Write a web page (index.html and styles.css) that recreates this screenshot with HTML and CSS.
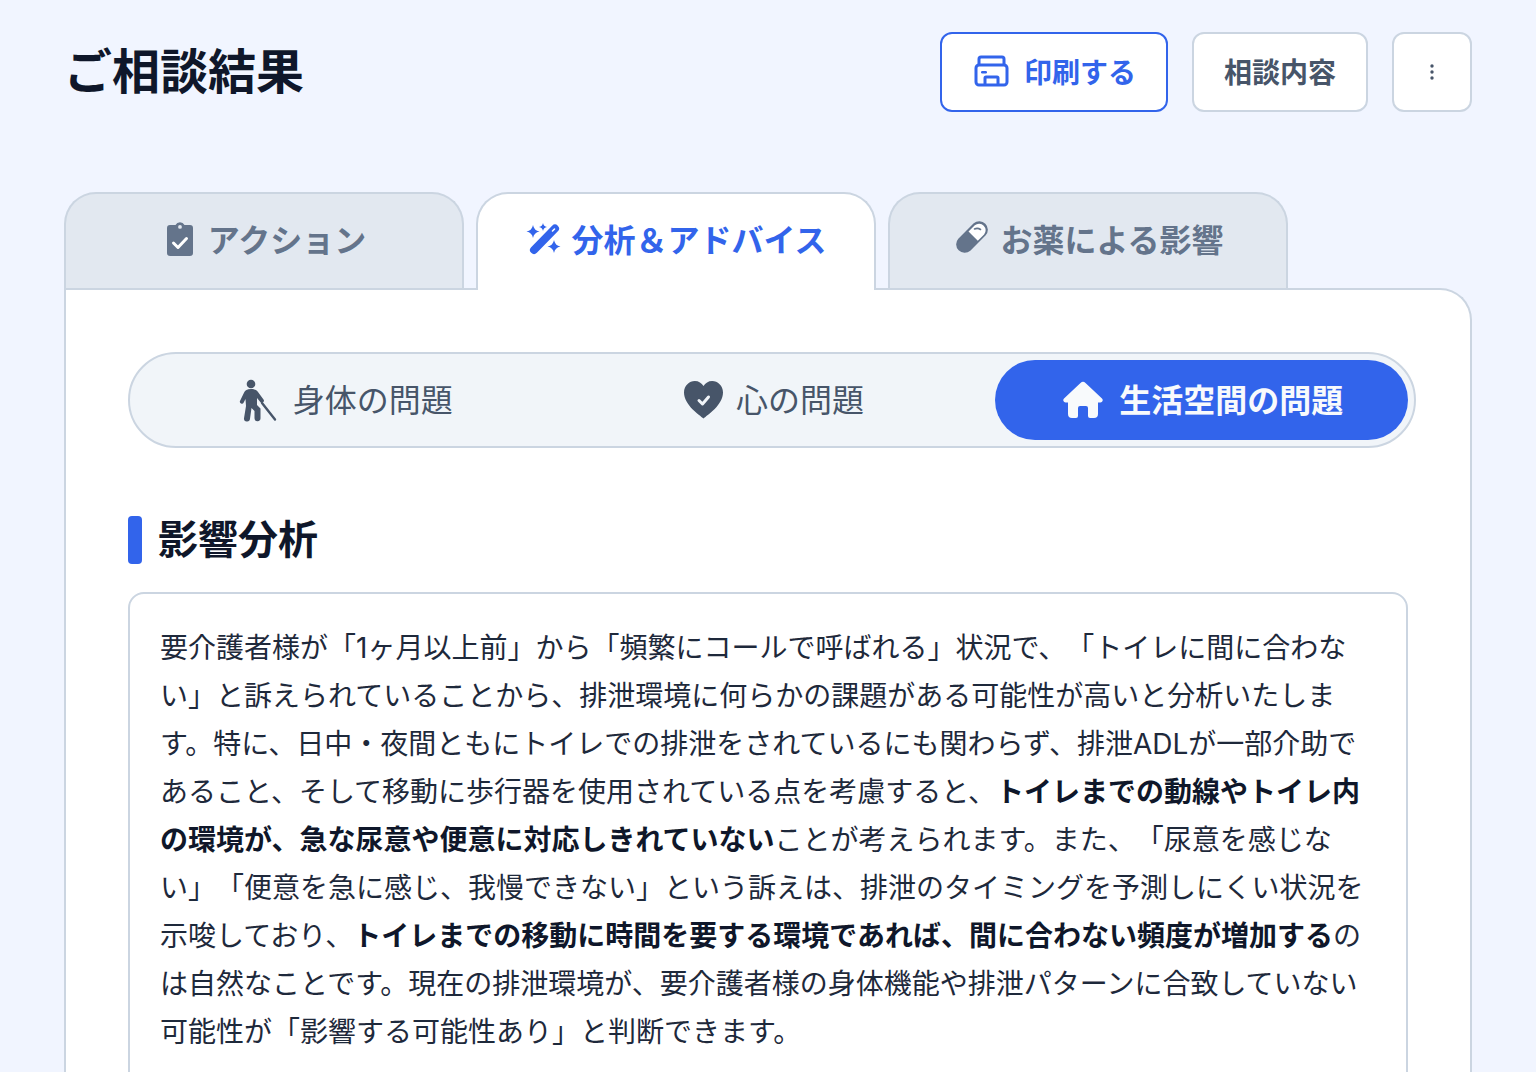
FILE: index.html
```html
<!DOCTYPE html>
<html lang="ja">
<head>
    <meta charset="UTF-8">
    <meta name="viewport" content="width=device-width, initial-scale=1.0">
    <title>ご相談結果</title>
    <link rel="stylesheet" href="styles.css">
</head>
<body>
    <header class="page-header">
        <h1>ご相談結果</h1>
        <div class="header-actions">
            <button class="btn btn-primary">
                <svg class="btn-icon" viewBox="0 0 36 36">
                    <g fill="none" stroke="currentColor" stroke-width="3" stroke-linejoin="round">
                        <path d="M5 12V6a2 2 0 0 1 2-2h21a2 2 0 0 1 2 2v6"/>
                        <rect x="2" y="12" width="31" height="20" rx="3"/>
                        <path d="M11 32v-7a1 1 0 0 1 1-1h11a1 1 0 0 1 1 1v7"/>
                    </g>
                    <rect x="7" y="18" width="6" height="2.500" rx="1.200" fill="currentColor"/>
                </svg>
                印刷する
            </button>
            <button class="btn btn-plain">相談内容</button>
            <button class="btn btn-more" aria-label="その他">
                <svg viewBox="0 0 4 16" width="4" height="16" fill="currentColor">
                    <circle cx="2" cy="2" r="1.700"/><circle cx="2" cy="8" r="1.700"/><circle cx="2" cy="14" r="1.700"/>
                </svg>
            </button>
        </div>
    </header>

    <nav class="tabs">
        <div class="tab">
            <svg class="tab-icon" viewBox="-5 0 32 35">
                <path fill="currentColor" fill-rule="evenodd" d="M3 4h5.500a5 5 0 0 1 9 0H23a3 3 0 0 1 3 3v25a3 3 0 0 1-3 3H3a3 3 0 0 1-3-3V7a3 3 0 0 1 3-3zm10 3.800a1.900 1.900 0 1 0 0-3.800 1.900 1.900 0 0 0 0 3.800z"/>
                <path fill="none" stroke="#fff" stroke-width="3" stroke-linecap="round" stroke-linejoin="round" d="M6.500 22l4.500 4.500 8.500-9"/>
            </svg>
            アクション
        </div>
        <div class="tab tab-active">
            <svg class="tab-icon" viewBox="-2 0 32 34">
                <path fill="none" stroke="currentColor" stroke-width="8" stroke-linecap="round" d="M7 28.500L28 7"/>
                <path fill="none" stroke="#fff" stroke-width="1.600" stroke-linecap="round" d="M25.500 9.500l2-2"/>
                <path fill="currentColor" d="M6 3.500Q7 9 12.500 10Q7 11 6 16.500Q5 11 -.5 10Q5 9 6 3.500zM16 1.500Q16.600 4.900 20 5.500Q16.600 6.100 16 9.500Q15.400 6.100 12 5.500Q15.400 4.900 16 1.500zM27 18.500Q28 24 33.500 25Q28 26 27 31.500Q26 26 20.500 25Q26 24 27 18.500z"/>
            </svg>
            分析＆アドバイス
        </div>
        <div class="tab">
            <svg class="tab-icon tab-icon-pill" viewBox="-5 0 34 32">
                <path fill="currentColor" d="M2.800 18.200L18.200 2.800a8.500 8.500 0 0 1 12 12L14.800 30.200a8.500 8.500 0 0 1-12-12z" transform="translate(-1.500 -1.500)"/>
                <path fill="#fff" d="M11.500 9.500L17.800 3.300a6.600 6.600 0 0 1 9.300 9.300L20.800 18.800z"/>
                <path fill="none" stroke="currentColor" stroke-width="1.600" stroke-linecap="round" d="M17.500 7a6 6 0 0 1 6 .5"/>
            </svg>
            お薬による影響
        </div>
    </nav>

    <main class="panel">
        <div class="segments">
            <div class="segment">
                <svg class="segment-icon" viewBox="-7 0 44 42" width="44" height="42">
                    <circle cx="11" cy="5" r="4.300" fill="currentColor"/>
                    <path fill="currentColor" d="M11 10c3.500 0 5.500 1 7 3l5.500 7.500a2 2 0 0 1-3.200 2.400L17 19v7l3.500 3.500V39a3 3 0 0 1-6 .3V32l-3-3-1.500 10.800a3 3 0 0 1-6-.6L6 27 5.500 20l-1.800 3.500a2 2 0 0 1-3.600-1.800l4-8.200c1-2 3-3.500 6.900-3.500z"/>
                    <path fill="none" stroke="currentColor" stroke-width="2.400" stroke-linecap="round" d="M22 24l13 16.500"/>
                </svg>
                身体の問題
            </div>
            <div class="segment">
                <svg class="segment-icon" viewBox="-4 0 40 38" width="40" height="38">
                    <path fill="currentColor" d="M19.500 37.500C15.500 34 0 24 0 11.500 0 4.500 5.500 0 10.800 0c4 0 6.800 2 8.700 5 1.900-3 4.700-5 8.700-5C33.500 0 39 4.500 39 11.500 39 24 23.500 34 19.500 37.500z"/>
                    <path fill="none" stroke="#f1f5f9" stroke-width="3" stroke-linecap="round" stroke-linejoin="round" d="M15 19.500l3.500 3.500 6-7"/>
                </svg>
                心の問題
            </div>
            <div class="segment segment-active">
                <svg class="segment-icon" viewBox="-4 0 44 36" width="44" height="36">
                    <path fill="currentColor" d="M17.500 1a3.600 3.600 0 0 1 5 0l16.500 15.500a2.300 2.300 0 0 1-1.600 4H35V32a4 4 0 0 1-4 4h-4a2 2 0 0 1-2-2v-8a2 2 0 0 0-2-2h-6a2 2 0 0 0-2 2v8a2 2 0 0 1-2 2H9a4 4 0 0 1-4-4V20.500H2.600a2.300 2.300 0 0 1-1.600-4z"/>
                </svg>
                生活空間の問題
            </div>
        </div>

        <h2 class="section-title">影響分析</h2>
        <div class="analysis-box">
            <p>要介護者様が「1ヶ月以上前」から「頻繁にコールで呼ばれる」状況で、「トイレに間に合わない」と訴えられていることから、排泄環境に何らかの課題がある可能性が高いと分析いたします。特に、日中・夜間ともにトイレでの排泄をされているにも関わらず、排泄ADLが一部介助であること、そして移動に歩行器を使用されている点を考慮すると、<strong>トイレまでの動線やトイレ内の環境が、急な尿意や便意に対応しきれていない</strong>ことが考えられます。また、「尿意を感じない」「便意を急に感じ、我慢できない」という訴えは、排泄のタイミングを予測しにくい状況を示唆しており、<strong>トイレまでの移動に時間を要する環境であれば、間に合わない頻度が増加する</strong>のは自然なことです。現在の排泄環境が、要介護者様の身体機能や排泄パターンに合致していない可能性が「影響する可能性あり」と判断できます。</p>
        </div>
    </main>
</body>
</html>
```

FILE: styles.css
```css
* {
    box-sizing: border-box;
}
html, body {
    height: 100%;
}
body {
    margin: 0;
    padding: 32px 64px 0;
    overflow: hidden;
    background-color: #f1f5ff;
    color: #0f172a;
    font-family: Inter, "Noto Sans CJK JP", sans-serif;
    text-spacing-trim: space-all;
}
.page-header {
    display: flex;
    justify-content: space-between;
    align-items: center;
    margin-bottom: 80px;
}
h1 {
    margin: 0;
    font-size: 48px;
    font-weight: 700;
    line-height: 80px;
}
.header-actions {
    display: flex;
    gap: 24px;
}
.btn {
    display: flex;
    align-items: center;
    justify-content: center;
    gap: 14px;
    height: 80px;
    padding: 0 30px 2px;
    border: 2px solid #cbd5e1;
    border-radius: 12px;
    background-color: #fff;
    color: #475569;
    font-family: inherit;
    font-size: 28px;
    font-weight: 700;
}
.btn-primary {
    padding-left: 32px;
    border-color: #3264eb;
    color: #3264eb;
}
.btn-icon {
    width: 36px;
    height: 36px;
}
.btn-more {
    width: 80px;
    padding: 0;
}
.tabs {
    display: flex;
    gap: 12px;
    position: relative;
    z-index: 1;
}
.tab {
    display: flex;
    align-items: center;
    justify-content: center;
    gap: 14px;
    width: 400px;
    height: 98px;
    padding-bottom: 8px;
    border: 2px solid #cbd5e1;
    border-bottom: 0;
    border-radius: 32px 32px 0 0;
    background-color: #e2e8f0;
    color: #64748b;
    font-size: 32px;
    font-weight: 700;
    box-shadow: inset 0 -2px 0 #cbd5e1;
}
.tab-active {
    background-color: #fff;
    color: #3264eb;
    box-shadow: none;
}
.tab-icon {
    width: 32px;
    height: 35px;
    overflow: visible;
}
.tab-icon-pill {
    width: 34px;
    height: 32px;
}
.panel {
    margin-top: -2px;
    padding: 62px 62px 0;
    border: 2px solid #cbd5e1;
    border-radius: 0 32px 0 0;
    background-color: #fff;
    border-bottom: 0;
}
.segments {
    display: grid;
    grid-template-columns: repeat(3, 1fr);
    gap: 16px;
    width: calc(100% + 8px);
    padding: 6px;
    border: 2px solid #cbd5e1;
    border-radius: 48px;
    background-color: #f1f5f9;
    margin-bottom: 68px;
}
.segment {
    display: flex;
    align-items: center;
    justify-content: center;
    gap: 16px;
    height: 80px;
    padding-bottom: 4px;
    border-radius: 40px;
    color: #475569;
    font-size: 32px;
}
.segment-active {
    background-color: #3264eb;
    color: #f8fafc;
    font-weight: 700;
}
.segment-icon {
    overflow: visible;
    position: relative;
    top: 2px;
}
.section-title {
    margin: 0 0 28px;
    padding-left: 30px;
    position: relative;
    font-size: 40px;
    font-weight: 700;
    line-height: 48px;
}
.section-title::before {
    content: "";
    position: absolute;
    left: 0;
    top: 0;
    width: 14px;
    height: 48px;
    border-radius: 4px;
    background-color: #3264eb;
}
.analysis-box {
    padding: 30px;
    border: 2px solid #cbd5e1;
    border-radius: 16px;
    background-color: #fff;
}
.analysis-box p {
    margin: 0;
    font-size: 28px;
    line-height: 48px;
    color: #1e293b;
}
.analysis-box strong {
    color: #0f172a;
}
```
